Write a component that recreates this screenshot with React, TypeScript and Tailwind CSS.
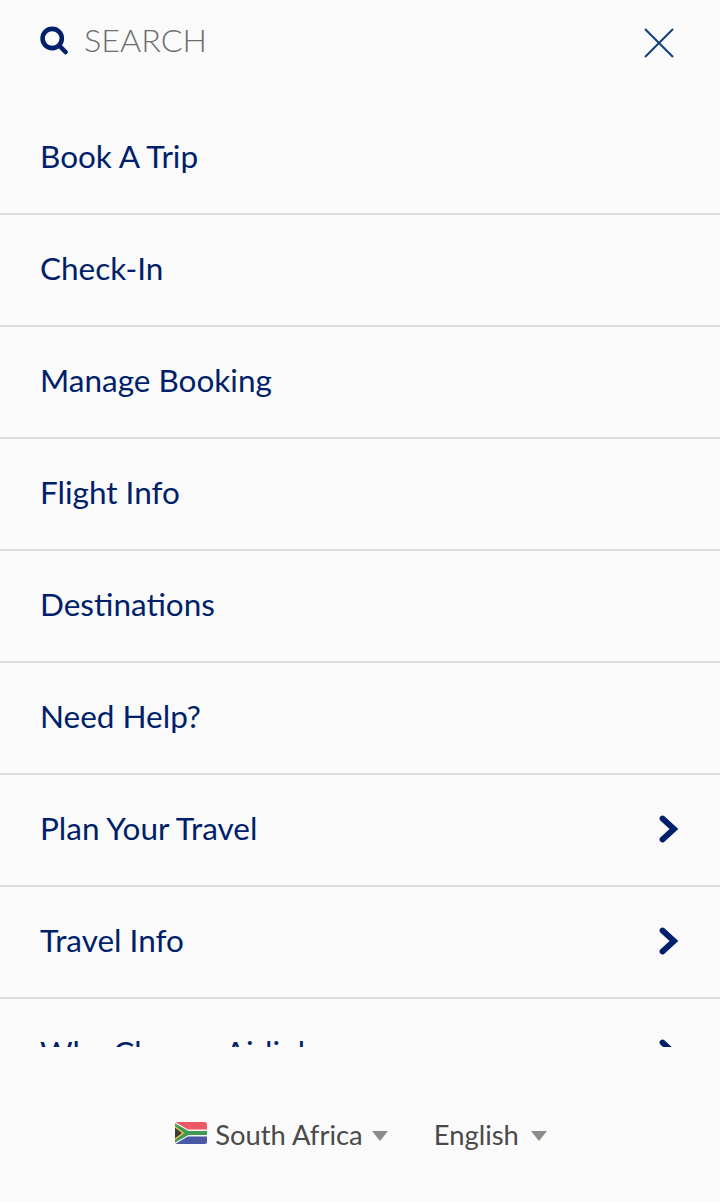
import React from "react";

const items: [string, boolean][] = [
  ["Book A Trip", false],
  ["Check-In", false],
  ["Manage Booking", false],
  ["Flight Info", false],
  ["Destinations", false],
  ["Need Help?", false],
  ["Plan Your Travel", true],
  ["Travel Info", true],
  ["Why Choose Airlink", true],
];

function Chevron() {
  return (
    <svg width="20" height="28" viewBox="0 0 20 28" fill="none" className="shrink-0">
      <path d="M3.5 3.5L15 14L3.5 24.5" stroke="#001f6b" strokeWidth="5.8" strokeLinecap="round" strokeLinejoin="miter" />
    </svg>
  );
}

function Caret() {
  return (
    <svg width="16" height="10" viewBox="0 0 16 10" className="block mt-[2px]">
      <path d="M0 0H16L8 10Z" fill="#8c8c8c" />
    </svg>
  );
}

function Flag() {
  return (
    <svg width="32" height="22" viewBox="0 0 32 22" className="shrink-0 -mt-[4px]">
      <defs>
        <clipPath id="f">
          <rect width="32" height="22" rx="2.5" />
        </clipPath>
      </defs>
      <g clipPath="url(#f)">
        <rect width="32" height="11" fill="#ee5a63" />
        <rect y="11" width="32" height="11" fill="#4a58a8" />
        <path d="M0 0L13 7.6H32V14.4H13L0 22Z" fill="#f4f4ee" />
        <path d="M0 1.5L13.5 9H32V13H13.5L0 20.5Z" fill="#3f9a55" />
        <path d="M0 4L9.5 11L0 18Z" fill="#e8c04a" />
        <path d="M0 5.8L7 11L0 16.2Z" fill="#3a3a3a" />
      </g>
    </svg>
  );
}

export default function App() {
  return (
    <div className="h-[1202px] w-[720px] flex flex-col overflow-hidden bg-[#fafafa] font-['Lato',sans-serif]">
      <div className="h-[103px] shrink-0 flex items-start justify-between pl-[40px] pr-[46px]">
        <div className="flex items-center gap-[16px] pt-[20px]">
          <svg width="28" height="29" viewBox="0 0 28 29" fill="none">
            <circle cx="12.2" cy="12.5" r="9.6" stroke="#001f6b" strokeWidth="4.6" />
            <path d="M19.2 19.5L25.5 26" stroke="#001f6b" strokeWidth="4.6" strokeLinecap="round" />
          </svg>
          <span className="text-[32.3px] leading-[40px] font-light text-[#6e6e6e]">SEARCH</span>
        </div>
        <svg width="30" height="30" viewBox="0 0 30 30" fill="none" className="mt-[28px]">
          <path d="M1 1L29 29M29 1L1 29" stroke="#0f3f7c" strokeWidth="2" />
        </svg>
      </div>
      <div className="flex-1 overflow-hidden">
        {items.map(([label, arrow]) => (
          <div
            key={label}
            className="h-[112px] shrink-0 flex items-center justify-between pl-[40px] pr-[41px] pb-[2px] border-b-2 border-[#dcdcdc] text-[31.5px] text-[#001f6b]"
          >
            <span>{label}</span>
            {arrow && <Chevron />}
          </div>
        ))}
      </div>
      <div className="h-[155px] shrink-0 flex items-start justify-center pl-[2px] pt-[68px] text-[27.4px] leading-[40px] text-[#4a4a4a]">
        <div className="flex items-center">
          <Flag />
          <span className="ml-[8px]">South Africa</span>
          <span className="ml-[9px]"><Caret /></span>
        </div>
        <div className="flex items-center ml-[46px]">
          <span>English</span>
          <span className="ml-[12px]"><Caret /></span>
        </div>
      </div>
    </div>
  );
}
